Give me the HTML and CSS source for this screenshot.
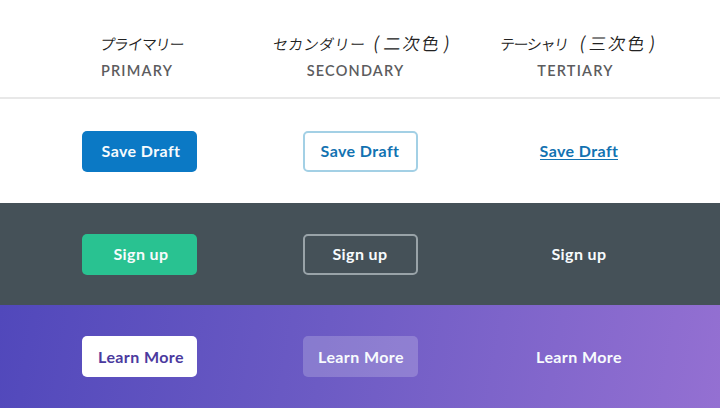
FILE: index.html
```html
<!DOCTYPE html>
<html lang="ja">
<head>
<meta charset="utf-8">
<title>Buttons</title>
<link rel="stylesheet" href="styles.css">
</head>
<body>
<header class="row head">
  <div class="heading"><span class="hand hand-primary">プライマリー</span><span class="caps">PRIMARY</span></div>
  <div class="heading"><span class="hand hand-secondary">セカンダリー<span class="open">(</span><span class="kanji">二次色</span><span class="close">)</span></span><span class="caps">SECONDARY</span></div>
  <div class="heading"><span class="hand hand-tertiary">テーシャリ<span class="open">(</span><span class="kanji">三次色</span><span class="close">)</span></span><span class="caps">TERTIARY</span></div>
</header>
<section class="row light">
  <a class="btn blue">Save Draft</a>
  <a class="btn outline-blue">Save Draft</a>
  <a class="link"><span class="underlined">Save Draft</span></a>
</section>
<section class="row dark">
  <a class="btn green">Sign up</a>
  <a class="btn outline-gray">Sign up</a>
  <a class="link">Sign up</a>
</section>
<section class="row purple">
  <a class="btn white">Learn More</a>
  <a class="btn glass">Learn More</a>
  <a class="link">Learn More</a>
</section>
</body>
</html>
```
FILE: styles.css
```css
* { box-sizing: border-box; }
body {
  margin: 0;
  width: 720px;
  height: 408px;
  overflow: hidden;
  background: #fff;
  font-family: Lato, "Noto Sans CJK JP", sans-serif;
  display: grid;
  grid-template-rows: 99px 104px 102px 103px;
}
.row {
  display: grid;
  grid-template-columns: 220px 221px 219px;
  padding-left: 29.5px;
  align-items: center;
  justify-items: center;
}
.head {
  border-bottom: 2px solid #e8e8e8;
  align-items: start;
  padding-top: 32px;
}
.heading {
  display: flex;
  flex-direction: column;
  align-items: center;
  white-space: nowrap;
}
.hand {
  font-family: "Noto Sans CJK JP", sans-serif;
  font-weight: 350;
  font-size: 15px;
  line-height: 24px;
  color: #222;
  transform: skewX(-8deg);
}
.hand-primary { letter-spacing: -1.1px; margin-left: 4px; }
.hand-secondary { letter-spacing: 0.4px; margin-left: 3px; }
.hand-tertiary { letter-spacing: -1.4px; margin-left: -6px; }
.open, .close { font-size: 18px; line-height: 20px; }
.open { margin: 0 4px 0 8px; }
.hand-tertiary .open { margin: 0 5px 0 12px; }
.close { margin-left: 3px; }
.kanji { font-size: 17px; letter-spacing: 2px; line-height: 20px; }
.caps {
  font-size: 14.5px;
  font-weight: 600;
  line-height: 18px;
  margin-top: 6px;
  margin-right: 9px;
  letter-spacing: 1.2px;
  color: #5c5c5e;
}
.hand-primary + .caps { margin-right: 5px; }
.btn {
  width: 115px;
  height: 41px;
  border-radius: 5px;
  display: flex;
  align-items: center;
  justify-content: center;
}
.btn, .link {
  font-family: Lato, sans-serif;
  font-weight: 700;
  font-size: 16px;
  line-height: 20px;
  letter-spacing: 0.4px;
  white-space: nowrap;
  color: #f7fbfd;
}
.link { margin-right: 2px; }
.blue, .green, .white { padding-left: 3px; }
.blue { background: #0b79c5; }
.outline-blue { border: 2px solid #a3d0e5; color: #1272b1; }
.light .link { color: #1272b1; }
.underlined { display: block; line-height: 17px; border-bottom: 1px solid #1272b1; }
.dark { background: #455158; }
.green { background: #29c291; }
.outline-gray { border: 2px solid #99a3a8; }
.purple { background: linear-gradient(100deg, #5148bb 0%, #6c5bc4 45%, #9470d2 100%); }
.white { background: #fff; color: #4b3a9e; }
.glass { background: rgba(255, 255, 255, .2); padding-left: 2px; }
```
